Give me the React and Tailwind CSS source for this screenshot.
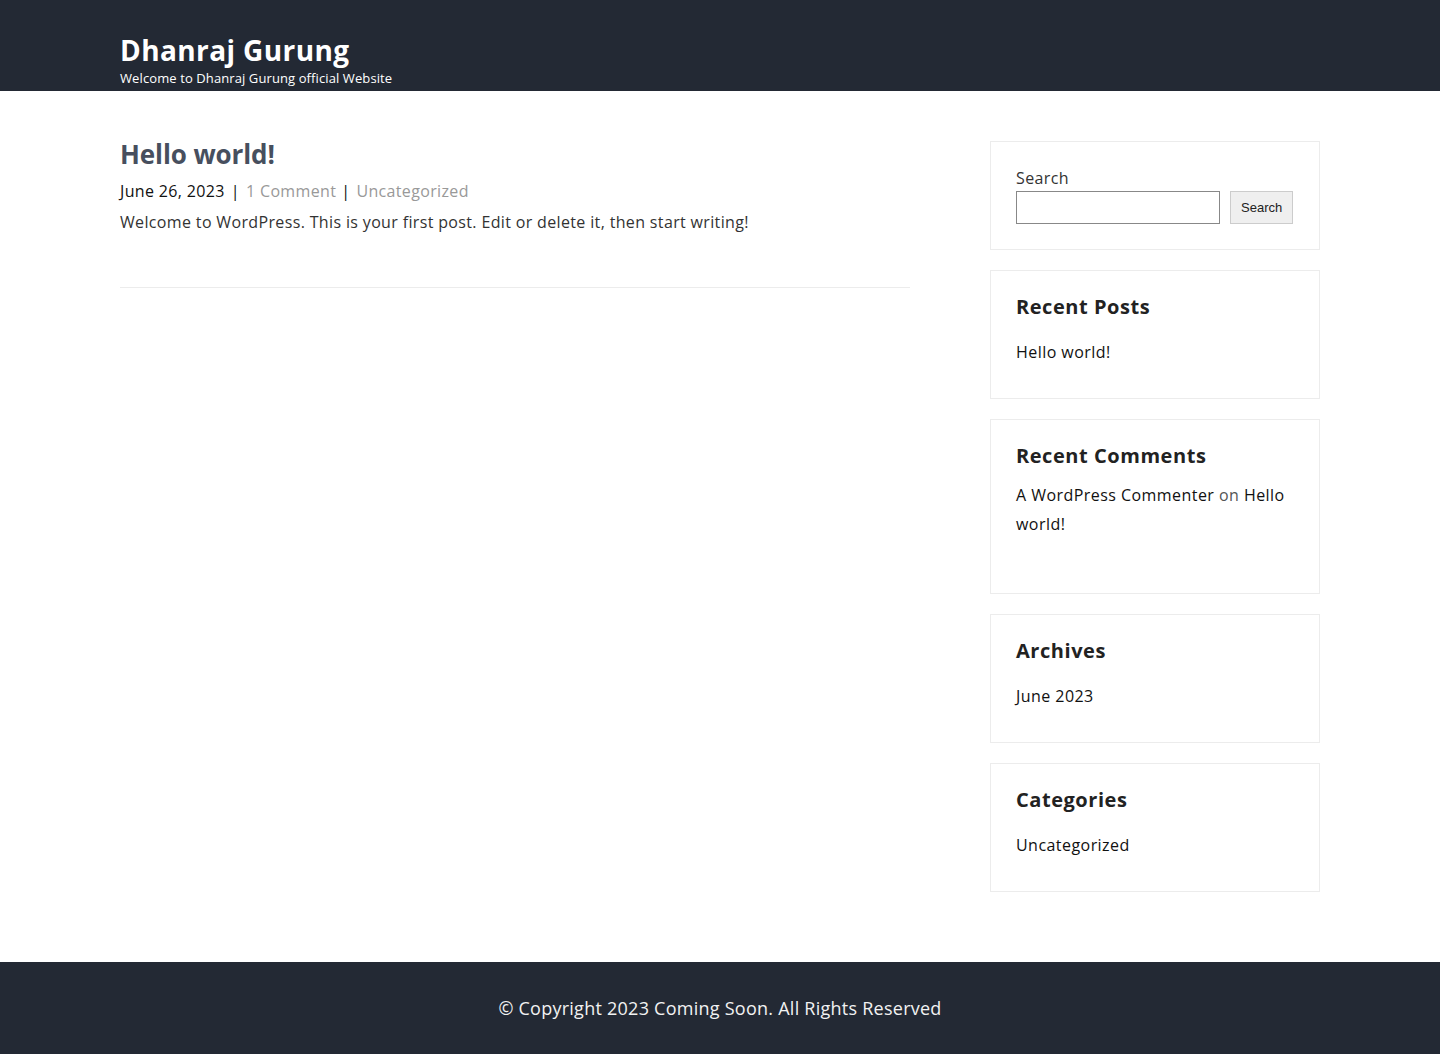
import React from 'react'

const font = { fontFamily: '"Open Sans", "DejaVu Sans", sans-serif' }

const Widget = ({ title, children, className = '' }) => (
  <section className={`border border-[#ececec] px-[25px] ${className}`}>
    {title && (
      <h2 className="text-[20px] font-bold text-[#222] leading-[30px] mb-[17px] tracking-[0.55px]">{title}</h2>
    )}
    {children}
  </section>
)

export default function App() {
  return (
    <div className="min-h-[1054px] bg-white flex flex-col text-[#222]" style={font}>
      {/* header */}
      <header className="bg-[#232934] h-[91px]">
        <div className="max-w-[1200px] mx-auto pt-[33px]">
          <h1 className="text-[28px] font-bold text-white leading-[34px] tracking-[0.4px]">Dhanraj Gurung</h1>
          <p className="text-[13px] text-white leading-[20px] mt-[1px] tracking-[0.1px]">Welcome to Dhanraj Gurung official Website</p>
        </div>
      </header>

      {/* content */}
      <main className="max-w-[1200px] w-full mx-auto flex gap-[80px] pt-[50px] pb-[70px] flex-1">
        <div className="w-[790px]">
          <article className="border-b border-[#ececec] pb-[52px]">
            <h2 className="text-[26px] font-bold text-[#474f5e] leading-[26px] tracking-[-0.1px]">Hello world!</h2>
            <div className="text-[16px] leading-[26px] mt-[11px] tracking-[0.35px]">
              <span className="text-[#111]">June 26, 2023</span>
              <span className="mx-[6px] text-[#111]">|</span>
              <a className="text-[#999]">1 Comment</a>
              <span className="ml-[5px] mr-[6px] text-[#111]">|</span>
              <a className="text-[#999]">Uncategorized</a>
            </div>
            <p className="text-[16px] leading-[26px] mt-[5px] text-[#333] tracking-[0.35px]">
              Welcome to WordPress. This is your first post. Edit or delete it, then start writing!
            </p>
          </article>
        </div>

        <aside className="w-[330px] flex flex-col gap-[20px]">
          <Widget className="pt-[25px] pb-[25px]">
            <label className="block text-[16px] text-[#333] leading-[22px] tracking-[0.4px]">Search</label>
            <div className="flex gap-[10px] mt-[2px]">
              <input className="w-[204px] h-[33px] border border-[#888] bg-white" />
              <button
                className="h-[33px] px-[10px] bg-[#efefef] border border-[#ccc] text-[13px] text-[#222]"
                style={{ fontFamily: '"Liberation Sans", Arial, sans-serif' }}
              >
                Search
              </button>
            </div>
          </Widget>

          <Widget title="Recent Posts" className="pt-[21px] pb-[33px]">
            <a className="block text-[16px] leading-[26px] text-[#111] tracking-[0.45px]">Hello world!</a>
          </Widget>

          <Widget title="Recent Comments" className="pt-[21px] pb-[54px]">
            <p className="text-[16px] leading-[29px] text-[#111] -mt-[7px] tracking-[0.45px]">
              A WordPress Commenter <span className="text-[#555]">on</span> Hello world!
            </p>
          </Widget>

          <Widget title="Archives" className="pt-[21px] pb-[33px]">
            <a className="block text-[16px] leading-[26px] text-[#111] tracking-[0.45px]">June 2023</a>
          </Widget>

          <Widget title="Categories" className="pt-[21px] pb-[33px]">
            <a className="block text-[16px] leading-[26px] text-[#111] tracking-[0.45px]">Uncategorized</a>
          </Widget>
        </aside>
      </main>

      {/* footer */}
      <footer className="bg-[#232934] h-[92px] flex items-center justify-center">
        <p className="text-[18px] text-[#f2f2f2] tracking-[0.25px]">© Copyright 2023 Coming Soon. All Rights Reserved</p>
      </footer>
    </div>
  )
}
